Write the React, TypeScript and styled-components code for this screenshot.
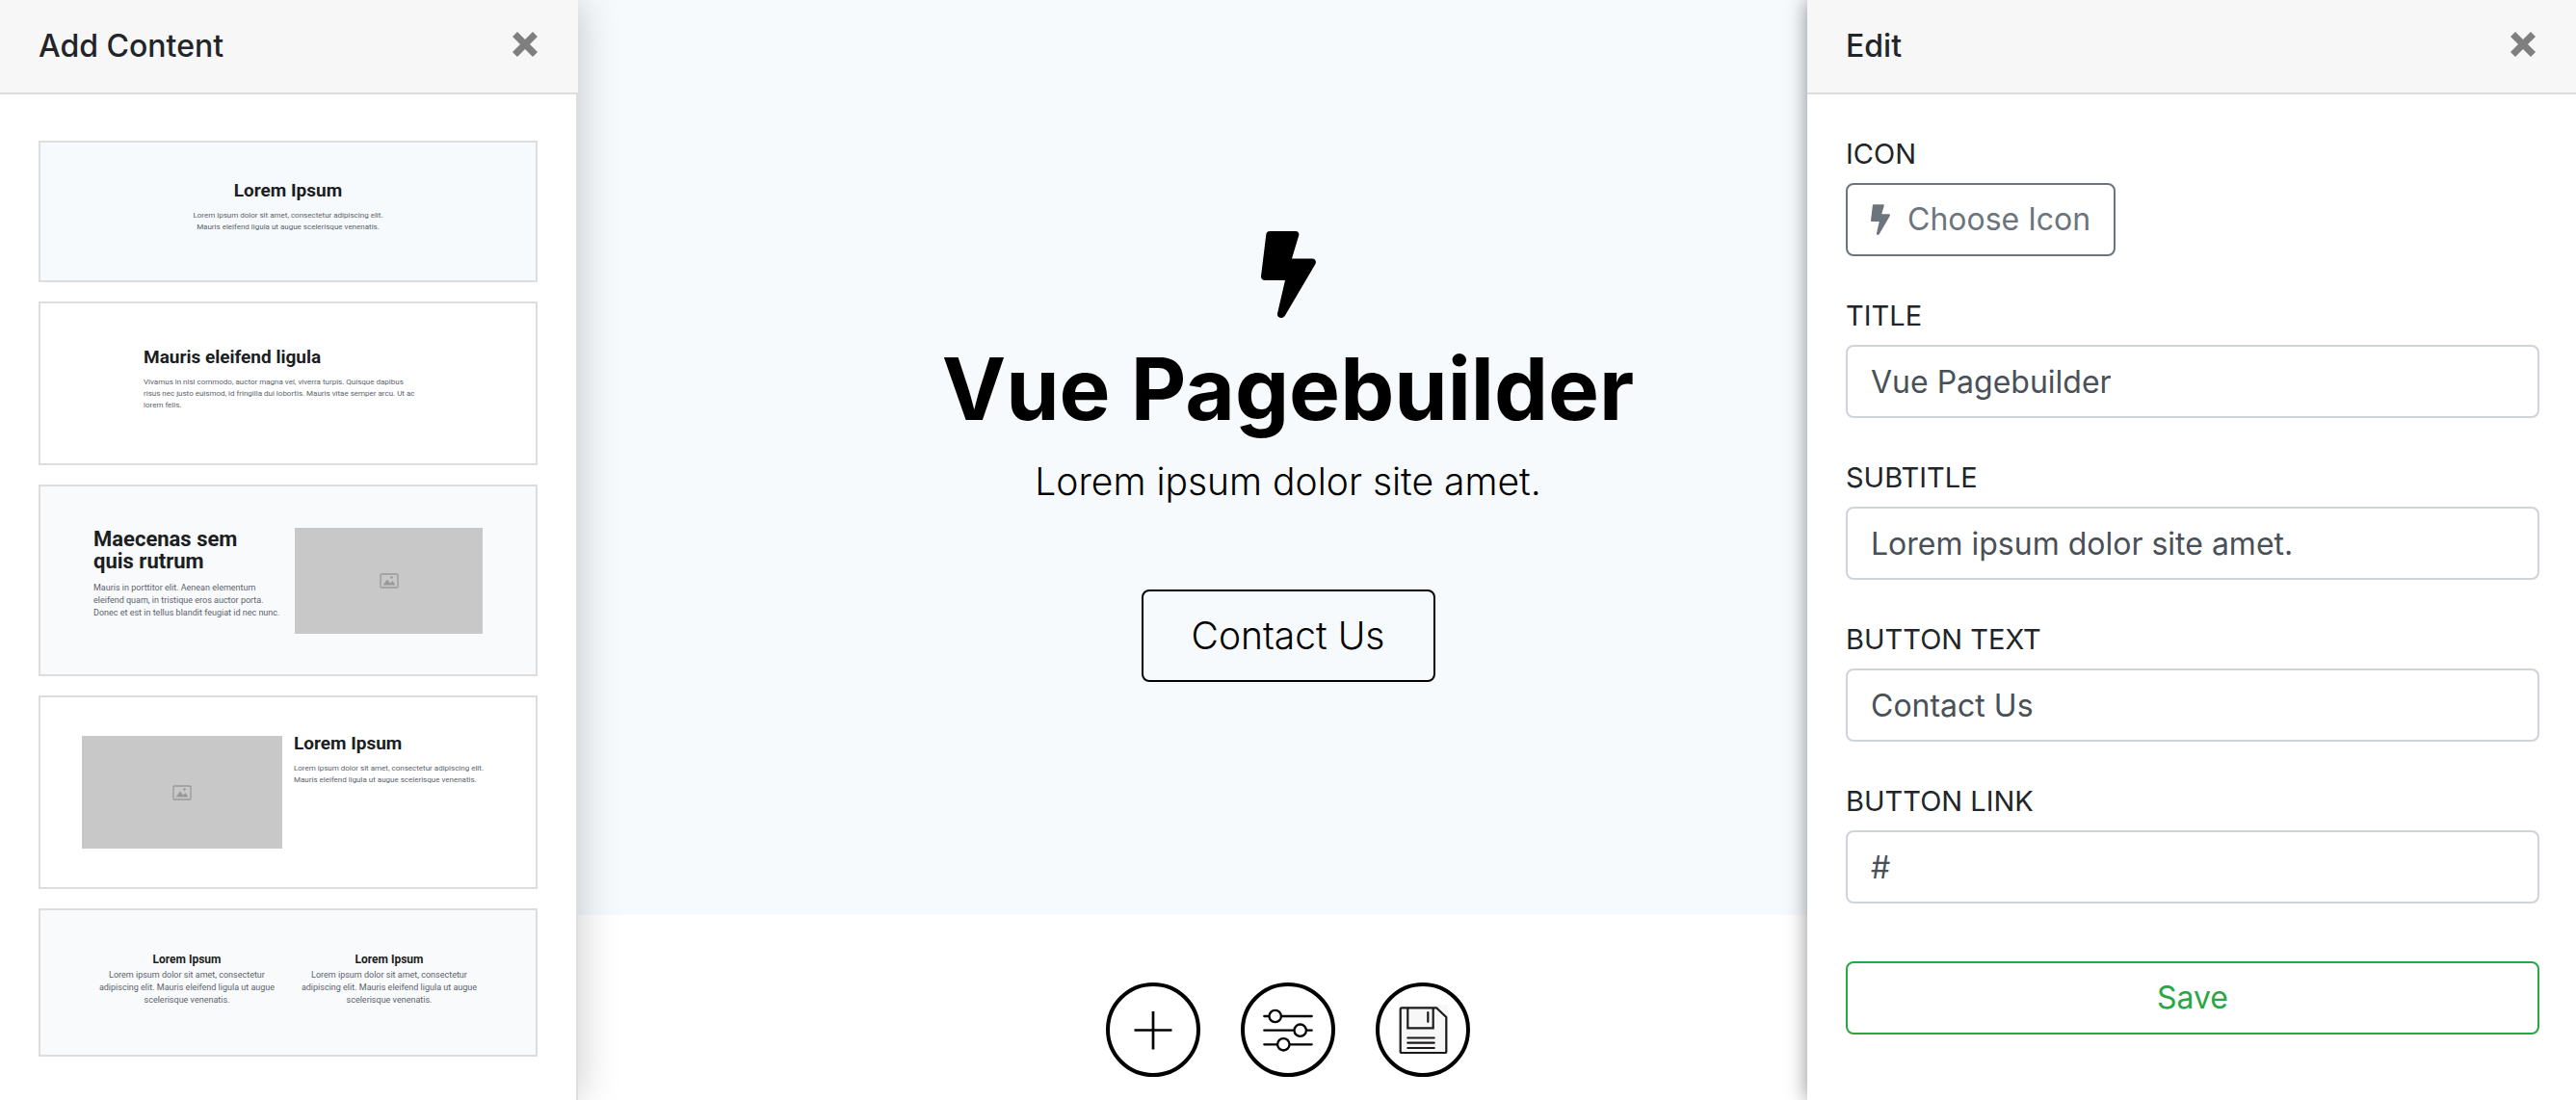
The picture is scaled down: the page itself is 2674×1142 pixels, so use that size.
import React, { useState } from "react";
import styled, { createGlobalStyle, css } from "styled-components";

const sans = `Inter, "Liberation Sans", sans-serif`;
const thumb = `Roboto, "Liberation Sans", sans-serif`;

const GlobalStyle = createGlobalStyle`
  *, *::before, *::after { box-sizing: border-box; }
  body { margin: 0; background: #fff; color: #212529; font-family: ${sans}; }
  button, input { font: inherit; color: inherit; margin: 0; }
  button { cursor: pointer; }
`;

/* Page shell: the canvas spans the whole row, both drawers lie over its ends */
const Shell = styled.div`
  display: grid;
  grid-template-columns: 600px minmax(0, 1fr) 798px;
  min-height: 100vh;
`;

const Canvas = styled.main`
  grid-column: 1 / -1;
  grid-row: 1;
  display: flex;
  flex-direction: column;
`;

const Hero = styled.section`
  display: flex;
  flex-direction: column;
  align-items: center;
  padding: 240px 40px 242px;
  background: #f7fafd;
  color: #000;
`;

const HeroTitle = styled.h1`
  margin: 26px 0 20px;
  font-size: 89px;
  font-weight: 700;
  line-height: 96px;
`;

const HeroSubtitle = styled.p`
  margin: 0 0 84px;
  font-size: 39px;
  font-weight: 300;
  line-height: 56px;
`;

const HeroLink = styled.a`
  padding: 18px 50px;
  border: 2px solid #000;
  border-radius: 8px;
  font-size: 39px;
  font-weight: 300;
  line-height: 56px;
  color: #000;
  text-decoration: none;
`;

const Toolbar = styled.div`
  display: flex;
  justify-content: center;
  gap: 42px;
  padding: 70px 0 20px;
`;

const RoundButton = styled.button`
  display: grid;
  place-items: center;
  width: 98px;
  height: 98px;
  padding: 0;
  border: 4px solid #000;
  border-radius: 50%;
  background: #fff;
  color: #000;
`;

const Drawer = styled.aside<{ $side: "left" | "right" }>`
  grid-row: 1;
  grid-column: ${(p) => (p.$side === "left" ? 1 : 3)};
  z-index: 1;
  display: flex;
  flex-direction: column;
  background: #fff;
  box-shadow: ${(p) =>
    p.$side === "left" ? "0 0 40px rgba(0, 0, 0, 0.22)" : "0 0 20px rgba(0, 0, 0, 0.45)"};
`;

const DrawerHeader = styled.header`
  display: flex;
  align-items: center;
  justify-content: space-between;
  height: 98px;
  padding: 0 42px 0 40px;
  border-bottom: 2px solid #ddd;
  background: #f7f7f7;
`;

const DrawerTitle = styled.h2`
  margin: 0;
  font-size: 32px;
  font-weight: 500;
  line-height: 40px;
`;

const CloseButton = styled.button`
  display: flex;
  padding: 0 0 4px;
  border: 0;
  background: none;
  color: #7f7f7f;
`;

const BlockList = styled.div`
  flex: 1;
  display: flex;
  flex-direction: column;
  gap: 20px;
  padding: 48px 40px 44px;
  border-right: 2px solid #ddd;
`;

type CardKind = "intro" | "article" | "mediaRight" | "mediaLeft" | "columns";

const cardLayouts = {
  intro: css`
    padding: 42px 40px 49px;
    text-align: center;
    background: #f7fafd;
  `,
  article: css`
    padding: 48px 107px 54px;
  `,
  mediaRight: css`
    grid-template-columns: minmax(0, 1fr) 195px;
    padding: 43px 55px 42px;
    background: #f9fafc;
  `,
  mediaLeft: css`
    grid-template-columns: 208px minmax(0, 1fr);
    column-gap: 12px;
    padding: 40px 43px;
  `,
  columns: css`
    grid-template-columns: 1fr 1fr;
    padding: 43px 47px 50px;
    text-align: center;
    background: #f9fafc;
  `,
};

const Card = styled.button<{ $kind: CardKind }>`
  display: grid;
  align-items: start;
  border: 2px solid #ddd;
  background: #fff;
  font-family: ${thumb};
  text-align: left;
  white-space: nowrap;
  ${(p) => cardLayouts[p.$kind]}
`;

const CardText = styled.span<{ $gap: number }>`
  display: flex;
  flex-direction: column;
  gap: ${(p) => p.$gap}px;
`;

const cardTitleSizes = {
  small: css`
    font-size: 12px;
    line-height: 16px;
  `,
  medium: css`
    font-size: 19px;
    line-height: 16px;
  `,
  large: css`
    font-size: 22px;
    line-height: 23px;
  `,
};

const CardTitle = styled.strong<{ $size: keyof typeof cardTitleSizes }>`
  font-weight: 700;
  color: #1b1e22;
  ${(p) => cardTitleSizes[p.$size]}
`;

const CardCopy = styled.span<{ $large?: boolean }>`
  font-size: ${(p) => (p.$large ? 9 : 8)}px;
  line-height: ${(p) => (p.$large ? 13 : 12)}px;
  color: #59636b;
`;

const Placeholder = styled.span<{ $tall?: boolean }>`
  display: grid;
  place-items: center;
  height: ${(p) => (p.$tall ? 117 : 110)}px;
  background: #c8c8c8;
  color: #999;
`;

const Form = styled.form`
  display: flex;
  flex-direction: column;
  gap: 40px;
  padding: 40px 38px 40px 40px;
`;

const Field = styled.div`
  display: flex;
  flex-direction: column;
  align-items: flex-start;
  gap: 8px;
`;

const Label = styled.label`
  font-size: 29px;
  line-height: 44px;
  text-transform: uppercase;
`;

const control = css`
  height: 76px;
  border: 2px solid;
  border-radius: 8px;
  background: #fff;
  font-size: 32px;
  line-height: 48px;
`;

const TextInput = styled.input`
  ${control}
  width: 100%;
  padding: 0 24px;
  border-color: #ced4da;
  color: #495057;
`;

const IconButton = styled.button`
  ${control}
  display: flex;
  align-items: center;
  gap: 18px;
  padding: 0 24px;
  border-color: #6c757d;
  color: #6c757d;
`;

const SaveButton = styled.button`
  ${control}
  margin-top: 20px;
  border-color: #28a745;
  color: #28a745;
`;

const Bolt = ({ width, height }: { width: number; height: number }) => (
  <svg width={width} height={height} viewBox="0 0 57 90" fill="currentColor" aria-hidden="true">
    <path d="M9 0H36C38.500 0 39.900 2 39.200 4.400L32 28.500H53C56.400 28.500 58 31.500 56.200 34.600L25 87.600C22.200 92 16.200 90 17 85.400L25 51H4C1.400 51 -.2 49.300 0 46.800L5.300 3.600C5.500 1.400 7 0 9 0Z" />
  </svg>
);

const Cross = () => (
  <svg width="26" height="26" viewBox="0 0 26 26" fill="currentColor" aria-hidden="true">
    <path d="M5 0L13 8L21 0L26 5L18 13L26 21L21 26L13 18L5 26L0 21L8 13L0 5Z" />
  </svg>
);

const Picture = () => (
  <svg width="20" height="16" viewBox="0 0 20 16" fill="none" aria-hidden="true">
    <rect x="1" y="1" width="18" height="14" rx="1" stroke="currentColor" strokeWidth="1.300" />
    <path d="M3.500 12.500L8 6.500L11 10.500L13.500 8L16.500 12.500Z" fill="currentColor" />
    <circle cx="12.500" cy="4.500" r="1.300" fill="currentColor" />
  </svg>
);

const PlusIcon = () => (
  <svg width="54" height="54" viewBox="0 0 54 54" stroke="currentColor" strokeWidth="2.700" aria-hidden="true">
    <path d="M7.500 27.500H46.500M27 8V47.500" />
  </svg>
);

const SlidersIcon = () => (
  <svg width="54" height="54" viewBox="0 0 54 54" stroke="currentColor" strokeWidth="2.300" strokeLinecap="round" aria-hidden="true">
    <path d="M2.300 13H51.700M2.300 27.700H51.700M2.300 42.300H51.700" />
    <g fill="#fff">
      <circle cx="13.700" cy="13" r="6.200" />
      <circle cx="39.700" cy="27.700" r="6.200" />
      <circle cx="22.300" cy="42.300" r="6.200" />
    </g>
  </svg>
);

const DiskIcon = () => (
  <svg width="54" height="54" viewBox="0 0 54 54" fill="none" stroke="#1c191a" strokeWidth="2.200" aria-hidden="true">
    <rect x="2" y="1" width="51" height="51" fill="#f7f7f7" stroke="none" />
    <path d="M5.200 4.300H41L51.300 14V49.500Q51.300 51 49.800 51H5.200Q3.700 51 3.700 49.500V5.800Q3.700 4.300 5.200 4.300Z" strokeLinejoin="round" />
    <path d="M11.300 4.300V25.300H37.700V4.300" />
    <path d="M32.300 9V18.800M11.300 35.500H38.700M11.300 40.700H38.700M11.300 46H38.700" strokeLinecap="round" />
  </svg>
);

const BlockDrawer = () => (
  <Drawer $side="left" aria-label="Add Content">
    <DrawerHeader>
      <DrawerTitle>Add Content</DrawerTitle>
      <CloseButton type="button" aria-label="Close"><Cross /></CloseButton>
    </DrawerHeader>
    <BlockList>
      <Card type="button" $kind="intro">
        <CardText $gap={12}>
          <CardTitle $size="medium">Lorem Ipsum</CardTitle>
          <CardCopy>
            Lorem ipsum dolor sit amet, consectetur adipiscing elit.<br />
            Mauris eleifend ligula ut augue scelerisque venenatis.
          </CardCopy>
        </CardText>
      </Card>
      <Card type="button" $kind="article">
        <CardText $gap={12}>
          <CardTitle $size="medium">Mauris eleifend ligula</CardTitle>
          <CardCopy>
            Vivamus in nisi commodo, auctor magna vel, viverra turpis. Quisque dapibus<br />
            risus nec justo euismod, id fringilla dui lobortis. Mauris vitae semper arcu. Ut ac<br />
            lorem felis.
          </CardCopy>
        </CardText>
      </Card>
      <Card type="button" $kind="mediaRight">
        <CardText $gap={10}>
          <CardTitle $size="large">Maecenas sem<br />quis rutrum</CardTitle>
          <CardCopy $large>
            Mauris in porttitor elit. Aenean elementum<br />
            eleifend quam, in tristique eros auctor porta.<br />
            Donec et est in tellus blandit feugiat id nec nunc.
          </CardCopy>
        </CardText>
        <Placeholder><Picture /></Placeholder>
      </Card>
      <Card type="button" $kind="mediaLeft">
        <Placeholder $tall><Picture /></Placeholder>
        <CardText $gap={12}>
          <CardTitle $size="medium">Lorem Ipsum</CardTitle>
          <CardCopy>
            Lorem ipsum dolor sit amet, consectetur adipiscing elit.<br />
            Mauris eleifend ligula ut augue scelerisque venenatis.
          </CardCopy>
        </CardText>
      </Card>
      <Card type="button" $kind="columns">
        {["first", "second"].map((column) => (
          <CardText key={column} $gap={2}>
            <CardTitle $size="small">Lorem Ipsum</CardTitle>
            <CardCopy $large>
              Lorem ipsum dolor sit amet, consectetur<br />
              adipiscing elit. Mauris eleifend ligula ut augue<br />
              scelerisque venenatis.
            </CardCopy>
          </CardText>
        ))}
      </Card>
    </BlockList>
  </Drawer>
);

type Values = { title: string; subtitle: string; buttonText: string; buttonLink: string };

const fields: { key: keyof Values; label: string }[] = [
  { key: "title", label: "Title" },
  { key: "subtitle", label: "Subtitle" },
  { key: "buttonText", label: "Button Text" },
  { key: "buttonLink", label: "Button Link" },
];

export default function App() {
  const [values, setValues] = useState<Values>({
    title: "Vue Pagebuilder",
    subtitle: "Lorem ipsum dolor site amet.",
    buttonText: "Contact Us",
    buttonLink: "#",
  });

  return (
    <>
      <GlobalStyle />
      <Shell>
        <BlockDrawer />
        <Canvas>
          <Hero>
            <Bolt width={57} height={90} />
            <HeroTitle>{values.title}</HeroTitle>
            <HeroSubtitle>{values.subtitle}</HeroSubtitle>
            <HeroLink href={values.buttonLink}>{values.buttonText}</HeroLink>
          </Hero>
          <Toolbar>
            <RoundButton type="button" aria-label="Add content"><PlusIcon /></RoundButton>
            <RoundButton type="button" aria-label="Settings"><SlidersIcon /></RoundButton>
            <RoundButton type="button" aria-label="Save page"><DiskIcon /></RoundButton>
          </Toolbar>
        </Canvas>
        <Drawer $side="right" aria-label="Edit">
          <DrawerHeader>
            <DrawerTitle>Edit</DrawerTitle>
            <CloseButton type="button" aria-label="Close"><Cross /></CloseButton>
          </DrawerHeader>
          <Form onSubmit={(event) => event.preventDefault()}>
            <Field>
              <Label htmlFor="icon">Icon</Label>
              <IconButton id="icon" type="button">
                <Bolt width={20} height={32} />
                Choose Icon
              </IconButton>
            </Field>
            {fields.map(({ key, label }) => (
              <Field key={key}>
                <Label htmlFor={key}>{label}</Label>
                <TextInput
                  id={key}
                  type="text"
                  value={values[key]}
                  onChange={(event) => setValues({ ...values, [key]: event.target.value })}
                />
              </Field>
            ))}
            <SaveButton type="submit">Save</SaveButton>
          </Form>
        </Drawer>
      </Shell>
    </>
  );
}
